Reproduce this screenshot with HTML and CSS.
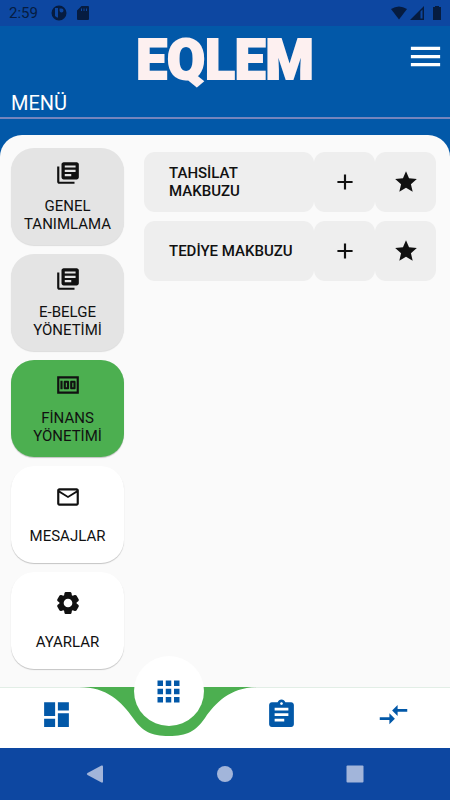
FILE: index.html
```html
<!DOCTYPE html>
<html lang="tr">
<head>
<meta charset="utf-8">
<meta name="viewport" content="width=device-width, initial-scale=1">
<title>EQLEM</title>
<link rel="stylesheet" href="styles.css">
</head>
<body>
<svg class="defs" aria-hidden="true">
  <symbol id="books" viewBox="0 0 24 24"><path d="M4 6H2v14c0 1.100.9 2 2 2h14v-2H4V6zm16-4H8c-1.100 0-2 .9-2 2v12c0 1.100.9 2 2 2h12c1.100 0 2-.9 2-2V4c0-1.100-.9-2-2-2zm-1 9H9V9h10v2zm-4 4H9v-2h6v2zm4-8H9V5h10v2z"/></symbol>
  <symbol id="plus" viewBox="0 0 24 24"><path d="M19 13h-6v6h-2v-6H5v-2h6V5h2v6h6v2z"/></symbol>
  <symbol id="star" viewBox="0 0 24 24"><path d="M12 17.270 18.180 21l-1.640-7.030L22 9.240l-7.190-.61L12 2 9.190 8.630 2 9.240l5.460 4.730L5.820 21z"/></symbol>
</svg>

<div class="status">
  <span class="clock">2:59</span>
  <svg class="status-icon" viewBox="0 0 16 16"><path fill-rule="evenodd" d="M8 .5a7.500 7.500 0 1 0 0 15a7.500 7.500 0 0 0 0-15zM4 3h3v9.500H6L4 11zM8.500 3.500h2a2 2 0 1 1-2 2z"/></svg>
  <svg class="status-icon" viewBox="0 0 16 16"><path fill-rule="evenodd" d="M6.500 1H13q1 0 1 1v12q0 1-1 1H3q-1 0-1-1V5.500zM6 3.500v2.500h1V3.500zM8.500 3.500v2.500h1V3.500zM11 3.500v2.500h1V3.500z"/></svg>
  <span class="spacer"></span>
  <svg class="status-icon" viewBox="0 0 16 16"><path d="M0 4Q8-1 16 4L8 14.500z"/></svg>
  <svg class="status-icon" viewBox="0 0 16 16"><path fill-rule="evenodd" d="M15 1v14H1zM11.500 6.500V13.500H13.500V4.500z"/></svg>
  <svg class="status-icon battery" viewBox="0 0 16 16"><path d="M6 1h4v1h2v13H4V2h2z"/></svg>
</div>

<header class="header">
  <div class="brand-row">
    <span class="brand">EQLEM</span>
    <button class="menu-button" aria-label="Menü">
      <svg viewBox="0 0 24 24"><path d="M3 18h18v-2H3v2zm0-5h18v-2H3v2zm0-7v2h18V6H3z"/></svg>
    </button>
  </div>
  <h1 class="title">MENÜ</h1>
</header>

<main class="panel">
  <nav class="categories">
    <button class="card muted"><svg><use href="#books"/></svg><span>GENEL TANIMLAMA</span></button>
    <button class="card muted"><svg><use href="#books"/></svg><span>E-BELGE YÖNETİMİ</span></button>
    <button class="card active"><svg viewBox="0 0 24 24"><path d="M15 16h3c.55 0 1-.45 1-1V9c0-.55-.45-1-1-1h-3c-.55 0-1 .45-1 1v6c0 .55.45 1 1 1zm1-6h1v4h-1v-4zm-7 6h3c.55 0 1-.45 1-1V9c0-.55-.45-1-1-1H9c-.55 0-1 .45-1 1v6c0 .55.45 1 1 1zm1-6h1v4h-1v-4zM5 8h2v8H5zM2 4v16h20V4H2zm2 14V6h16v12H4z"/></svg><span>FİNANS YÖNETİMİ</span></button>
    <button class="card"><svg viewBox="0 0 24 24"><path d="M22 6c0-1.100-.9-2-2-2H4c-1.100 0-2 .9-2 2v12c0 1.100.9 2 2 2h16c1.100 0 2-.9 2-2V6zm-2 0-8 5-8-5h16zm0 12H4V8l8 5 8-5v10z"/></svg><span>MESAJLAR</span></button>
    <button class="card"><svg viewBox="0 0 24 24"><path d="M13.850 22.250h-3.700c-.74 0-1.360-.54-1.450-1.270l-.27-1.890c-.27-.14-.53-.29-.79-.46l-1.800.72c-.7.260-1.470-.03-1.810-.65L2.200 15.530c-.35-.66-.2-1.440.360-1.880l1.530-1.190c-.01-.15-.02-.3-.02-.46 0-.15.010-.31.020-.46l-1.520-1.190c-.59-.45-.74-1.260-.37-1.880l1.850-3.190c.34-.62 1.110-.9 1.790-.63l1.810.73c.26-.17.520-.32.780-.46l.27-1.910c.09-.7.710-1.250 1.440-1.250h3.700c.74 0 1.360.540 1.450 1.270l.27 1.890c.27.140.530.290.790.460l1.800-.72c.71-.26 1.480.030 1.820.650l1.840 3.180c.36.660.2 1.440-.36 1.880l-1.520 1.190c.01.150.020.300.020.460s-.01.310-.02.460l1.520 1.190c.56.450.720 1.230.370 1.860l-1.860 3.220c-.34.620-1.110.9-1.800.63l-1.800-.72c-.26.170-.52.320-.78.460l-.27 1.910c-.1.680-.72 1.220-1.460 1.220zM12 8a4 4 0 1 0 0 8a4 4 0 0 0 0-8z"/></svg><span>AYARLAR</span></button>
  </nav>
  <section class="actions">
    <div class="action">
      <a class="tile name" href="#">TAHSİLAT MAKBUZU</a>
      <button class="tile" aria-label="Ekle"><svg><use href="#plus"/></svg></button>
      <button class="tile" aria-label="Favori"><svg><use href="#star"/></svg></button>
    </div>
    <div class="action">
      <a class="tile name" href="#">TEDİYE MAKBUZU</a>
      <button class="tile" aria-label="Ekle"><svg><use href="#plus"/></svg></button>
      <button class="tile" aria-label="Favori"><svg><use href="#star"/></svg></button>
    </div>
  </section>
</main>

<nav class="tabs">
  <button class="tab" aria-label="Panel"><svg class="tab-icon" viewBox="0 0 24 24"><path d="M3 13h8V3H3v10zm0 8h8v-6H3v6zm10 0h8V11h-8v10zm0-18v6h8V3h-8z"/></svg></button>
  <div class="tab current">
    <svg class="dip" viewBox="0 0 180 50"><path d="M0 0C28 0 43 15 54 31C63 44 72 49 90 49S117 44 126 31C137 15 152 0 180 0z"/></svg>
    <button class="fab" aria-label="Uygulamalar"><svg class="tab-icon" viewBox="0 0 24 24"><path d="M4 8h4V4H4v4zm6 12h4v-4h-4v4zm-6 0h4v-4H4v4zm0-6h4v-4H4v4zm6 0h4v-4h-4v4zm6-10v4h4V4h-4zm-6 4h4V4h-4v4zm6 6h4v-4h-4v4zm0 6h4v-4h-4v4z"/></svg></button>
  </div>
  <button class="tab" aria-label="Görevler"><svg class="tab-icon" viewBox="0 0 24 24"><path d="M19 3h-4.180C14.400 1.840 13.300 1 12 1c-1.300 0-2.400.84-2.820 2H5c-1.100 0-2 .9-2 2v14c0 1.100.9 2 2 2h14c1.100 0 2-.9 2-2V5c0-1.100-.9-2-2-2zm-7 0c.55 0 1 .45 1 1s-.45 1-1 1-1-.45-1-1 .45-1 1-1zm2 14H7v-2h7v2zm3-4H7v-2h10v2zm0-4H7V7h10v2z"/></svg></button>
  <button class="tab" aria-label="Transfer"><svg class="tab-icon" viewBox="0 0 24 24"><path d="M9.010 14H2v2h7.010v3L13 15l-3.990-4v3zm5.980-1v-3H22V8h-7.010V5L11 9l3.990 4z"/></svg></button>
</nav>

<div class="system">
  <button aria-label="Geri"><svg viewBox="0 0 18 18"><path d="M15.500.5Q17 0 17 1.500v15Q17 18 15.500 17.500L1.500 10Q0 9 1.500 8z"/></svg></button>
  <button aria-label="Ana ekran"><svg viewBox="0 0 18 18"><circle cx="9" cy="9" r="8"/></svg></button>
  <button aria-label="Son uygulamalar"><svg viewBox="0 0 18 18"><rect x=".5" y=".5" width="17" height="17" rx="1"/></svg></button>
</div>
</body>
</html>
```
FILE: styles.css
```css
* { box-sizing: border-box; }

body {
  margin: 0;
  min-height: 100vh;
  display: flex;
  flex-direction: column;
  background: #0258a8;
  font-family: Roboto, "Liberation Sans", sans-serif;
  color: #111;
}

button {
  border: 0;
  padding: 0;
  background: none;
  color: inherit;
  font: inherit;
  cursor: pointer;
}

svg { display: block; fill: currentColor; }
.defs { position: absolute; width: 0; height: 0; }

.status {
  display: flex;
  align-items: center;
  gap: 2px;
  height: 26px;
  padding: 0 5px 0 9px;
  background: #0d47a1;
  color: #061c40;
}
.clock { font-size: 15px; line-height: 26px; margin-right: 11px; }
.status-icon { width: 16px; height: 16px; }
.status-icon:nth-of-type(2) { margin-left: 6px; }
.spacer { flex: 1; }
.battery { margin-left: 2px; }

.header { border-bottom: 2px solid #7585bd; }
.brand-row {
  display: grid;
  grid-template-columns: 1fr auto 1fr;
  align-items: start;
  height: 62px;
  padding: 0 5px;
}
.brand {
  grid-column: 2;
  padding-top: 6px;
  font-size: 55px;
  font-weight: 900;
  line-height: 56px;
  color: #fdf0f0;
  -webkit-text-stroke: 2px #fdf0f0;
}
.menu-button { justify-self: end; padding-top: 11px; color: #fff; }
.menu-button svg { width: 39px; height: 39px; }
.title {
  margin: 0;
  padding: 3px 11px 2px;
  font-size: 20px;
  font-weight: 400;
  line-height: 24px;
  color: #fff;
}

.panel {
  flex: 1;
  display: flex;
  gap: 20px;
  margin-top: 16px;
  padding: 13px 14px 18px 11px;
  border-radius: 22px 22px 0 0;
  background: #fafafa;
}

.categories { display: flex; flex-direction: column; gap: 9px; width: 113px; }
.card {
  display: flex;
  flex-direction: column;
  align-items: center;
  justify-content: space-evenly;
  height: 97px;
  border-radius: 23px;
  background: #fff;
  box-shadow: 0 1px 1px rgba(0, 0, 0, .22);
  font-size: 15px;
  line-height: 18px;
}
.card svg, .tile svg { width: 26px; height: 26px; }
.muted { background: #e4e4e4; box-shadow: 0 1px 1px rgba(0, 0, 0, .12); }
.active { background: #4caf50; }

.actions { flex: 1; display: flex; flex-direction: column; gap: 9px; padding-top: 4px; }
.action { display: grid; grid-template-columns: 1fr 61px 61px; height: 60px; }
.tile {
  display: flex;
  align-items: center;
  justify-content: center;
  border-radius: 11px;
  background: #eee;
}
.name {
  justify-content: flex-start;
  padding: 0 18px 0 25px;
  color: #111;
  font-size: 15px;
  font-weight: 500;
  line-height: 18px;
  text-decoration: none;
}

.tabs {
  display: grid;
  grid-template-columns: repeat(4, 1fr);
  height: 61px;
  border-top: 1px solid #e2eee6;
  background: #fff;
  color: #0258a8;
}
.tab {
  display: flex;
  align-items: center;
  justify-content: center;
  padding-bottom: 7px;
}
.tab-icon { width: 33px; height: 33px; }
.current { position: relative; }
.dip {
  position: absolute;
  top: -1px;
  left: 50%;
  width: 180px;
  height: 50px;
  margin-left: -90px;
  color: #4caf50;
}
.fab {
  position: absolute;
  top: -32px;
  left: 50%;
  width: 70px;
  height: 70px;
  margin-left: -35px;
  display: flex;
  align-items: center;
  justify-content: center;
  border-radius: 50%;
  background: #fff;
}

.system {
  display: flex;
  align-items: center;
  justify-content: center;
  gap: 112px;
  height: 52px;
  background: #0d47a1;
  color: #a2b5da;
}
.system svg { width: 18px; height: 18px; }
```
